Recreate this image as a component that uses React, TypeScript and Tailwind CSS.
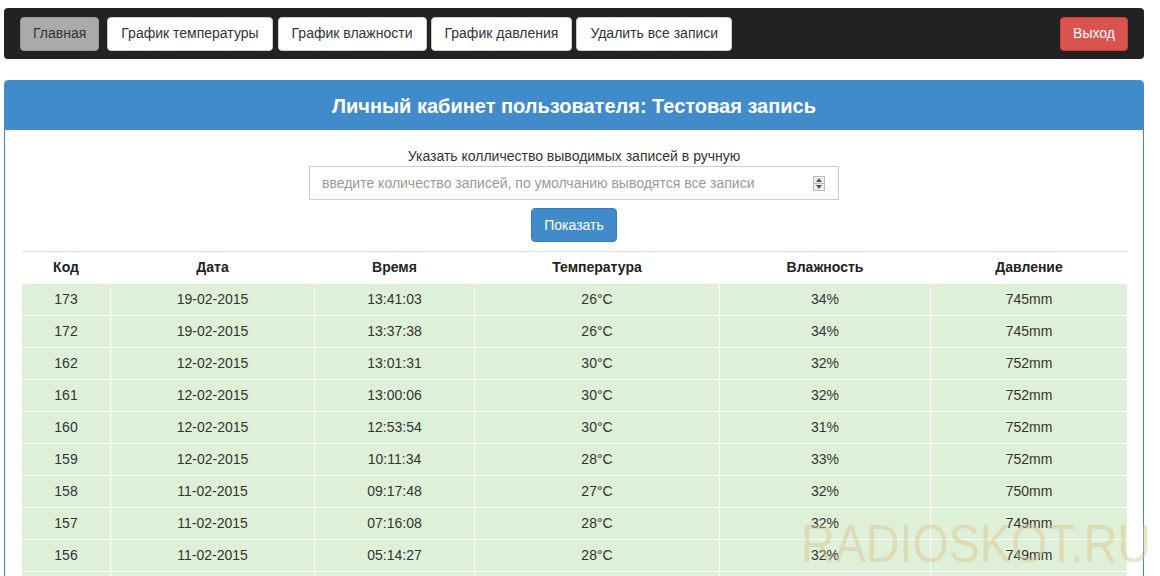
import React from "react";

type Reading = {
  id: number;
  date: string;
  time: string;
  temp: string;
  humidity: string;
  pressure: string;
};

const readings: Reading[] = [
  { id: 173, date: "19-02-2015", time: "13:41:03", temp: "26°C", humidity: "34%", pressure: "745mm" },
  { id: 172, date: "19-02-2015", time: "13:37:38", temp: "26°C", humidity: "34%", pressure: "745mm" },
  { id: 162, date: "12-02-2015", time: "13:01:31", temp: "30°C", humidity: "32%", pressure: "752mm" },
  { id: 161, date: "12-02-2015", time: "13:00:06", temp: "30°C", humidity: "32%", pressure: "752mm" },
  { id: 160, date: "12-02-2015", time: "12:53:54", temp: "30°C", humidity: "31%", pressure: "752mm" },
  { id: 159, date: "12-02-2015", time: "10:11:34", temp: "28°C", humidity: "33%", pressure: "752mm" },
  { id: 158, date: "11-02-2015", time: "09:17:48", temp: "27°C", humidity: "32%", pressure: "750mm" },
  { id: 157, date: "11-02-2015", time: "07:16:08", temp: "28°C", humidity: "32%", pressure: "749mm" },
  { id: 156, date: "11-02-2015", time: "05:14:27", temp: "28°C", humidity: "32%", pressure: "749mm" },
  { id: 155, date: "11-02-2015", time: "03:12:46", temp: "28°C", humidity: "32%", pressure: "749mm" },
];

const navButtons = ["График температуры", "График влажности", "График давления", "Удалить все записи"];

function NavBar() {
  return (
    <div className="ml-[4px] mt-[8px] flex h-[51px] w-[1140px] items-center justify-between rounded-[4px] bg-[#222222] pr-[16px] pl-[16px]">
      <div className="flex items-center">
        <button
          type="button"
          className="h-[34px] rounded-[4px] border border-[#999] bg-[#aaaaaa] px-[12px] text-[14px] text-[#333]"
        >
          Главная
        </button>
        <div className="ml-[8px] flex items-center gap-[4px]">
          {navButtons.map((label, i) => (
            <button
              key={label}
              type="button"
              className={
                "h-[34px] rounded-[4px] border border-[#ccc] bg-white px-[13px] text-[14px] text-[#333] " +
                (i === 0 ? "mr-[1px]" : "")
              }
            >
              {label}
            </button>
          ))}
        </div>
      </div>
      <button
        type="button"
        className="h-[34px] rounded-[4px] border border-[#d43f3a] bg-[#d9534f] px-[12px] text-[14px] text-white"
      >
        Выход
      </button>
    </div>
  );
}

function Spinner() {
  return (
    <div className="flex h-[15px] w-[12px] flex-col border border-[#bbb] bg-[#eee]">
      <div className="flex flex-1 items-center justify-center border-b border-[#bbb]">
        <svg width="6" height="4" viewBox="0 0 6 4">
          <path d="M0 4 L3 0 L6 4 Z" fill="#555" />
        </svg>
      </div>
      <div className="flex flex-1 items-center justify-center">
        <svg width="6" height="4" viewBox="0 0 6 4">
          <path d="M0 0 L3 4 L6 0 Z" fill="#555" />
        </svg>
      </div>
    </div>
  );
}

function ReadingsTable() {
  const cols = ["w-[89px]", "w-[204px]", "w-[160px]", "w-[245px]", "w-[211px]", "w-[197px]"];
  const heads = ["Код", "Дата", "Время", "Температура", "Влажность", "Давление"];
  return (
    <table className="w-[1106px] table-fixed border-collapse text-[14px] text-[#333]">
      <colgroup>
        {cols.map((c, i) => (
          <col key={i} className={c} />
        ))}
      </colgroup>
      <thead>
        <tr className="h-[32px] border-t border-[#ddd]">
          {heads.map((h) => (
            <th key={h} className="p-0 text-center font-bold text-[#222]">
              {h}
            </th>
          ))}
        </tr>
      </thead>
      <tbody>
        {readings.map((r) => (
          <tr key={r.id} className="h-[32px] bg-[#dff0d8]">
            {[r.id, r.date, r.time, r.temp, r.humidity, r.pressure].map((v, i) => (
              <td key={i} className="border border-white p-0 text-center">
                {v}
              </td>
            ))}
          </tr>
        ))}
      </tbody>
    </table>
  );
}

export default function App() {
  return (
    <div className="relative h-[576px] w-[1160px] overflow-hidden bg-white font-['Liberation_Sans',Arial,sans-serif]">
      <NavBar />
      <div className="mt-[21px] ml-[4px] w-[1140px] rounded-t-[4px] border border-[#428bca]">
        <div className="flex h-[49px] items-center justify-center bg-[#428bca]">
          <h1 className="text-[20px] font-bold text-white">Личный кабинет пользователя: Тестовая запись</h1>
        </div>
        <div className="px-[16px] pt-[16px]">
          <div className="flex flex-col items-center">
            <label className="text-[14px] leading-[20px] text-[#333]">Указать колличество выводимых записей в ручную</label>
            <div className="flex h-[34px] w-[530px] items-center justify-between border border-[#ccc] pr-[13px] pl-[12px]">
              <span className="text-[14px] text-[#999]">введите количество записей, по умолчанию выводятся все записи</span>
              <Spinner />
            </div>
            <button
              type="button"
              className="mt-[8px] h-[34px] w-[86px] rounded-[4px] border border-[#357ebd] bg-[#428bca] text-[14px] text-white"
            >
              Показать
            </button>
          </div>
          <div className="mt-[9px]">
            <ReadingsTable />
          </div>
        </div>
      </div>
      <div className="pointer-events-none absolute top-[517px] left-[801px] origin-left scale-x-[0.88] text-[53px] leading-none whitespace-nowrap text-[#d9c08f]/45">
        RADIOSKOT.RU
      </div>
    </div>
  );
}
